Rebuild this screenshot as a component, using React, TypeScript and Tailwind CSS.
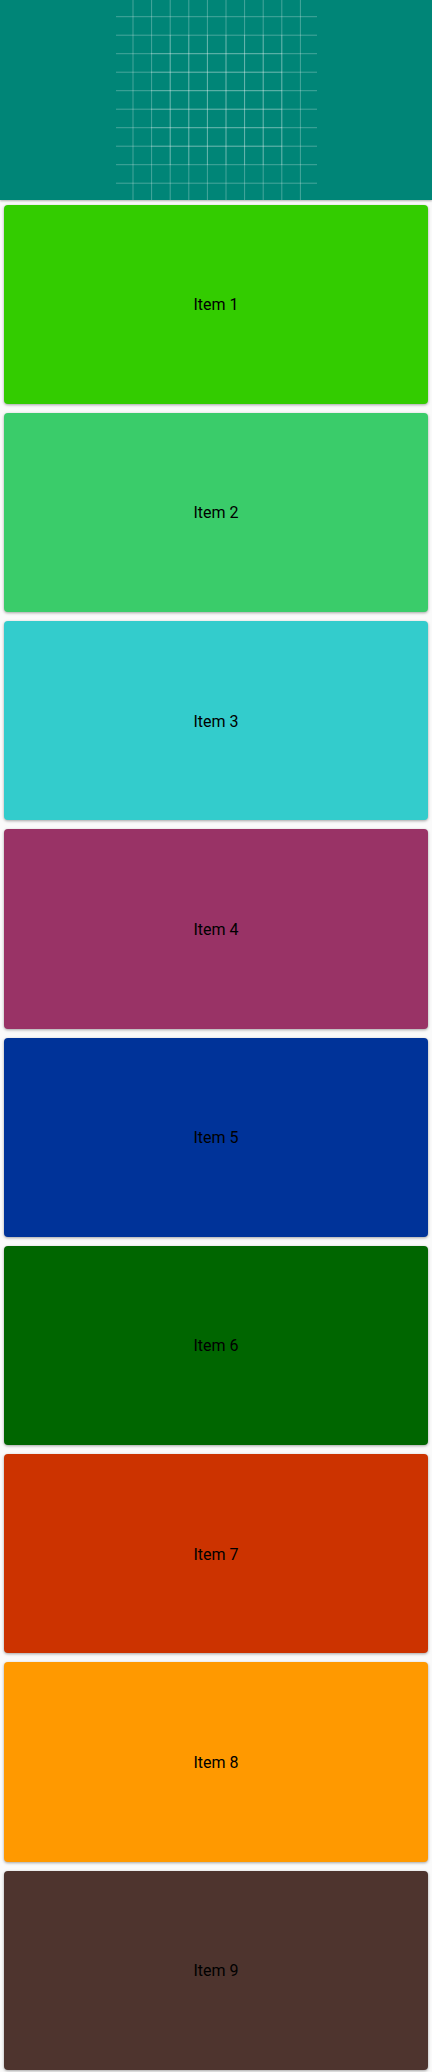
import React from "react";

const ITEMS = [
  { label: "Item 1", color: "bg-[#33cc00]" },
  { label: "Item 2", color: "bg-[#3acc6a]" },
  { label: "Item 3", color: "bg-[#33cccc]" },
  { label: "Item 4", color: "bg-[#993366]" },
  { label: "Item 5", color: "bg-[#003399]" },
  { label: "Item 6", color: "bg-[#006600]" },
  { label: "Item 7", color: "bg-[#cc3300]" },
  { label: "Item 8", color: "bg-[#ff9900]" },
  { label: "Item 9", color: "bg-[#4e342e]" },
];

const VX = Array.from({ length: 10 }, (_, i) => 133 + i * 18.6);
const HY = Array.from({ length: 10 }, (_, i) => 16.7 + i * 18.5);

function GridArt() {
  return (
    <svg width="432" height="200" viewBox="0 0 432 200" className="block">
      {VX.map((x) => (
        <line key={"v" + x} x1={x} y1={0} x2={x} y2={200} stroke="#fff" strokeOpacity={0.28} strokeWidth={1} />
      ))}
      {HY.map((y) => (
        <line key={"h" + y} x1={116} y1={y} x2={317} y2={y} stroke="#fff" strokeOpacity={0.28} strokeWidth={1} />
      ))}
      {/* brighter middle */}
      {VX.slice(2, 9).map((x) => (
        <line key={"vi" + x} x1={x} y1={35} x2={x} y2={165} stroke="#fff" strokeOpacity={0.2} strokeWidth={1} />
      ))}
      {HY.slice(2, 8).map((y) => (
        <line key={"hi" + y} x1={151} y1={y} x2={282} y2={y} stroke="#fff" strokeOpacity={0.2} strokeWidth={1} />
      ))}
    </svg>
  );
}

export default function App() {
  return (
    <div className="w-[432px] bg-[#fafafa] font-['Roboto','Liberation_Sans',sans-serif]">
      <div className="h-[200px] bg-[#008577] shadow-[0_1px_2px_rgba(0,0,0,0.3)] relative z-10">
        <GridArt />
      </div>
      <div className="flex flex-col">
        {ITEMS.map((it) => (
          <div
            key={it.label}
            className={`mx-1 my-[4.5px] h-[199.25px] rounded ${it.color} shadow-[0_1px_3px_rgba(0,0,0,0.35)] flex items-center justify-center pt-[2px]`}
          >
            <span className="text-base text-black">{it.label}</span>
          </div>
        ))}
      </div>
    </div>
  );
}
